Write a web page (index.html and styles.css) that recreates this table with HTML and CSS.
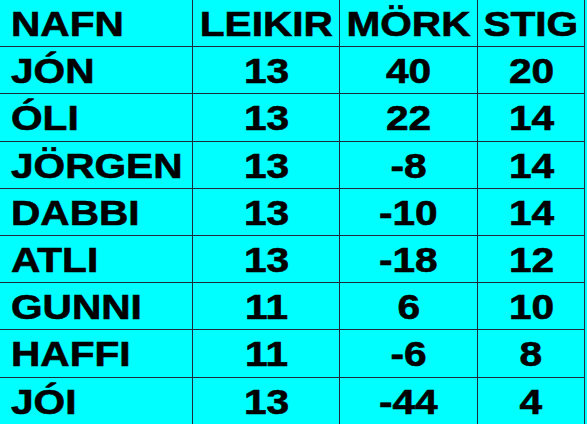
FILE: index.html
```html
<!DOCTYPE html>
<html>
<head>
<meta charset="utf-8">
<link rel="stylesheet" href="styles.css">
</head>
<body>
<div class="board">
  <div class="cell name"><span>NAFN</span></div><div class="cell"><span>LEIKIR</span></div><div class="cell"><span>MÖRK</span></div><div class="cell"><span>STIG</span></div>
  <div class="cell name"><span>JÓN</span></div><div class="cell"><span>13</span></div><div class="cell"><span>40</span></div><div class="cell"><span>20</span></div>
  <div class="cell name"><span>ÓLI</span></div><div class="cell"><span>13</span></div><div class="cell"><span>22</span></div><div class="cell"><span>14</span></div>
  <div class="cell name"><span>JÖRGEN</span></div><div class="cell"><span>13</span></div><div class="cell"><span>-8</span></div><div class="cell"><span>14</span></div>
  <div class="cell name"><span>DABBI</span></div><div class="cell"><span>13</span></div><div class="cell"><span>-10</span></div><div class="cell"><span>14</span></div>
  <div class="cell name"><span>ATLI</span></div><div class="cell"><span>13</span></div><div class="cell"><span>-18</span></div><div class="cell"><span>12</span></div>
  <div class="cell name"><span>GUNNI</span></div><div class="cell"><span>11</span></div><div class="cell"><span>6</span></div><div class="cell"><span>10</span></div>
  <div class="cell name"><span>HAFFI</span></div><div class="cell"><span>11</span></div><div class="cell"><span>-6</span></div><div class="cell"><span>8</span></div>
  <div class="cell name"><span>JÓI</span></div><div class="cell"><span>13</span></div><div class="cell"><span>-44</span></div><div class="cell"><span>4</span></div>
</div>
</body>
</html>
```
FILE: styles.css
```css
html, body {
  margin: 0;
  padding: 0;
  background: #00ffff;
  overflow: hidden;
}
.board {
  display: grid;
  grid-template-columns: 193px 147px 138px 107px;
  grid-auto-rows: 47.2px;
  width: 585px;
  font-family: "Liberation Sans", Arial, sans-serif;
  font-weight: bold;
  font-size: 35px;
  color: #000;
  -webkit-text-stroke: 0.6px #000;
}
.cell {
  box-sizing: border-box;
  border-right: 1px solid #1e2a3c;
  border-bottom: 1px solid #1e2a3c;
  display: flex;
  align-items: center;
  justify-content: center;
  white-space: nowrap;
  line-height: 1;
  padding-top: 1px;
}
.cell span {
  display: inline-block;
  transform: scaleX(1.16);
  transform-origin: center;
}
.name {
  justify-content: flex-start;
  padding-left: 11px;
}
.name span {
  transform-origin: left center;
}
```
